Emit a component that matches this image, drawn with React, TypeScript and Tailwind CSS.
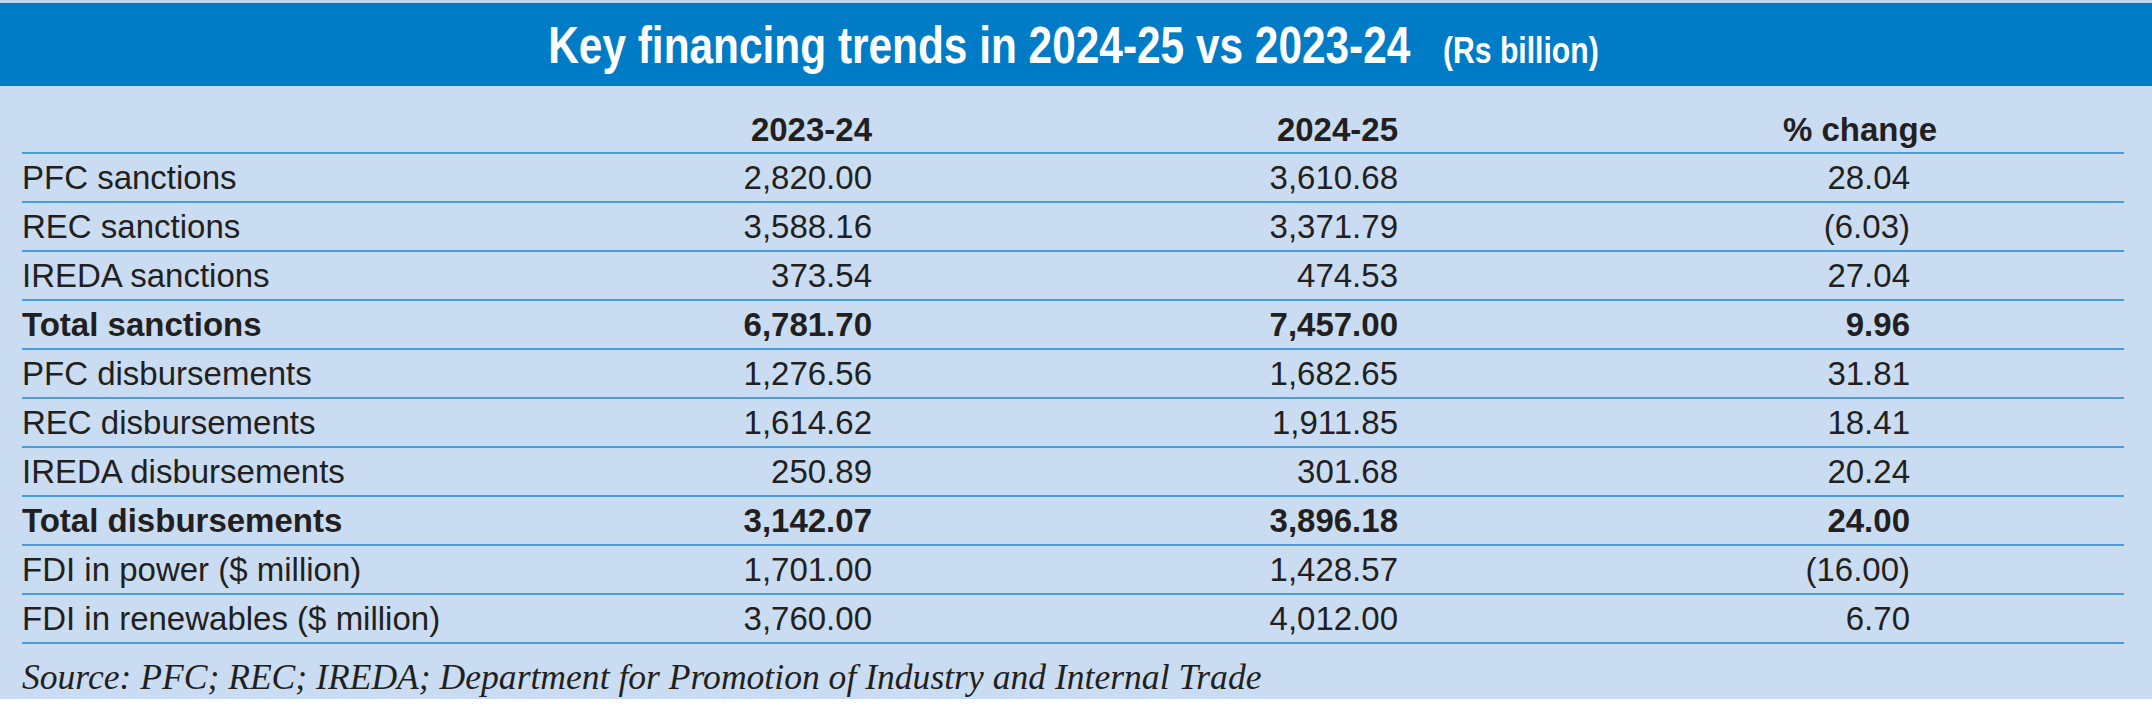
const rows = [
  { label: "PFC sanctions", a: "2,820.00", b: "3,610.68", c: "28.04" },
  { label: "REC sanctions", a: "3,588.16", b: "3,371.79", c: "(6.03)" },
  { label: "IREDA sanctions", a: "373.54", b: "474.53", c: "27.04" },
  { label: "Total sanctions", a: "6,781.70", b: "7,457.00", c: "9.96", bold: true },
  { label: "PFC disbursements", a: "1,276.56", b: "1,682.65", c: "31.81" },
  { label: "REC disbursements", a: "1,614.62", b: "1,911.85", c: "18.41" },
  { label: "IREDA disbursements", a: "250.89", b: "301.68", c: "20.24" },
  { label: "Total disbursements", a: "3,142.07", b: "3,896.18", c: "24.00", bold: true },
  { label: "FDI in power ($ million)", a: "1,701.00", b: "1,428.57", c: "(16.00)" },
  { label: "FDI in renewables ($ million)", a: "3,760.00", b: "4,012.00", c: "6.70" },
];

const sans = "font-['Liberation_Sans',Arial,sans-serif]";

export default function App() {
  return (
    <div className="w-[2152px] h-[712px] bg-white">
      <div className="h-[3px] bg-[#c3d6e9]" />
      <div className="h-[83px] bg-[#007cc7] flex items-center justify-center text-white">
        {/* no condensed face installed, so squeeze the bold sans */}
        <div className="flex items-baseline -ml-[6px] scale-x-[0.815] font-['Liberation_Sans',Arial,sans-serif] font-bold leading-none pt-[1px]">
          <span className="text-[52px]">Key financing trends in 2024-25 vs 2023-24</span>
          <span className="ml-[40px] text-[37px]">(Rs billion)</span>
        </div>
      </div>

      <div className={`h-[613px] bg-[#c9dcf1] pl-[22px] pr-[28px] text-[#231f20] ${sans}`}>
        <div className="grid grid-cols-[560px_290px_526px_1fr] h-[68px] items-end border-b-2 border-[#4a9ddb] pb-[6px] text-[33px] font-bold leading-none">
          <div />
          <div className="text-right">2023-24</div>
          <div className="text-right">2024-25</div>
          <div className="text-right pr-[187px]">% change</div>
        </div>

        {rows.map((r) => (
          <div
            key={r.label}
            className={`grid grid-cols-[560px_290px_526px_1fr] h-[49px] items-center border-b-2 border-[#4a9ddb] text-[33px] leading-none ${
              r.bold ? "font-bold" : ""
            }`}
          >
            <div>{r.label}</div>
            <div className="text-right">{r.a}</div>
            <div className="text-right">{r.b}</div>
            <div className="text-right pr-[214px]">{r.c}</div>
          </div>
        ))}

        <div className="pt-[16px] font-['Liberation_Serif','Times_New_Roman',serif] italic text-[35.6px] leading-none">
          Source: PFC; REC; IREDA; Department for Promotion of Industry and Internal Trade
        </div>
      </div>
    </div>
  );
}
